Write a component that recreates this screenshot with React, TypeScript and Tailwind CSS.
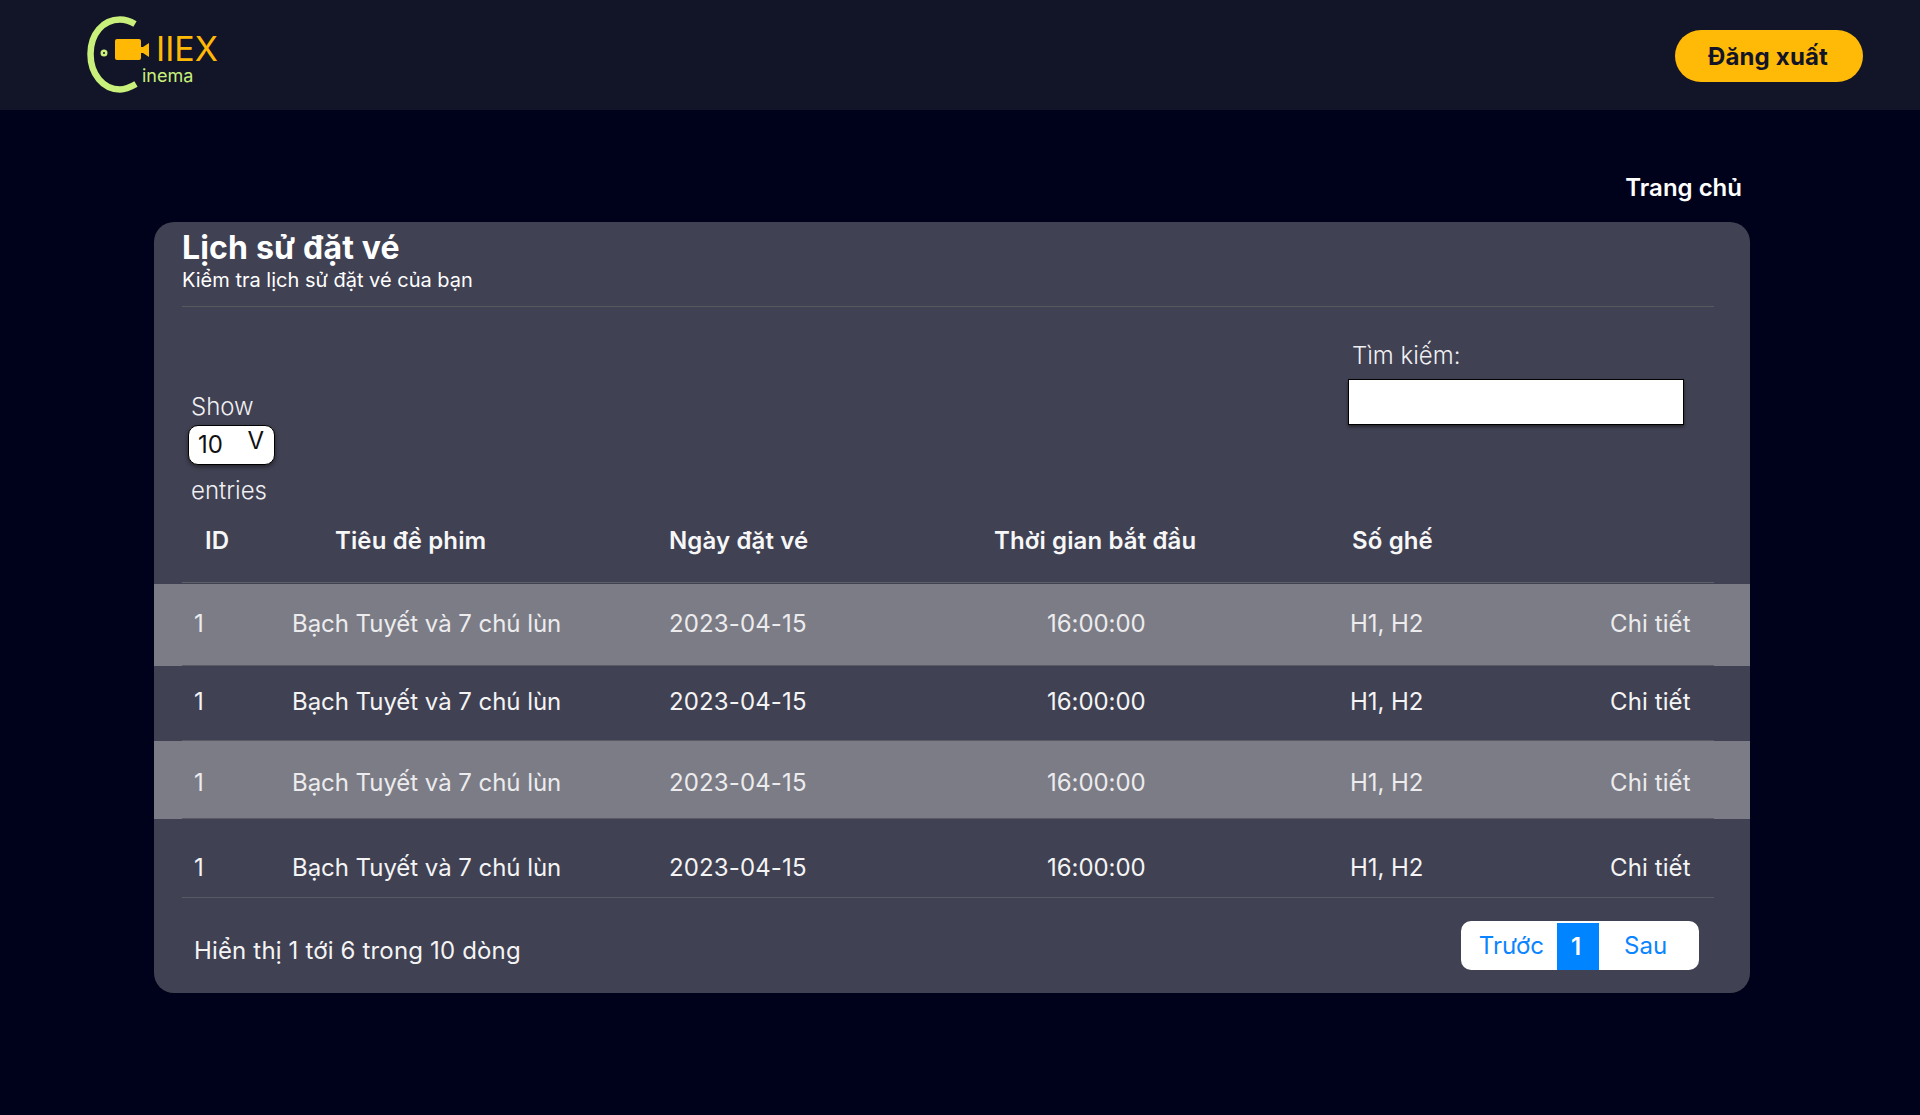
const rows = [
  { band: true, h: 'h-[82px]', pad: 'pb-[2px]' },
  { band: false, h: 'h-[75px]', pad: 'pb-[3px]' },
  { band: true, h: 'h-[78px]', pad: 'pt-[6px]' },
  { band: false, h: 'h-[79px]', pad: 'pt-[19px]' },
]

function Logo() {
  return (
    <div className="relative w-[140px] h-[110px]">
      <svg className="absolute left-0 top-0" width="140" height="110" viewBox="0 0 140 110" fill="none">
        <path d="M78 24 C72 20.5 68 19.5 63 19.5 C46 19.5 33.5 34 33.5 54 C33.5 74 46 89.5 63 89.5 C68 89.5 72 88 79 84" stroke="#c8f07a" strokeWidth="6.5" />
        <circle cx="47" cy="53" r="3.5" fill="#c8f07a" />
        <circle cx="47" cy="53" r="1" fill="#121527" />
        <rect x="58" y="39" width="26" height="21" rx="2" fill="#ffb905" />
        <path d="M83 47 H86 L92 43 V57 L86 53 H83 Z" fill="#ffb905" />
      </svg>
      <span className="absolute left-[99px] top-[34px] text-[34px] leading-[30px] text-[#ffb905]">IIEX</span>
      <span className="absolute left-[85px] top-[67px] text-[18px] leading-[18px] text-[#c8f07a]">inema</span>
    </div>
  )
}

function TableRow({ band, h, pad }: { band: boolean; h: string; pad: string }) {
  return (
    <div className={band ? 'bg-[#7c7c86] text-[#ececee]' : 'text-[#f4f4f5]'}>
      <div className={`ml-[28px] mr-[36px] grid grid-cols-[110px_377px_325px_356px_260px_1fr] items-center border-b border-[#5a5a66] text-[24px] tracking-[-0.05px] ${h} ${pad}`}>
        <div className="pl-[12px]">1</div>
        <div>Bạch Tuyết và 7 chú lùn</div>
        <div className="tracking-[0.13px]">2023-04-15</div>
        <div className="pl-[53px]">16:00:00</div>
        <div>H1, H2</div>
        <div className="tracking-[0.1px]">Chi tiết</div>
      </div>
    </div>
  )
}

export default function App() {
  return (
    <div className="min-h-[1115px] bg-[#00011a] text-white font-['Inter',sans-serif]">
      <header className="h-[110px] bg-[#121527] flex items-center justify-between pl-[57px] pr-[57px]">
        <Logo />
        <button className="w-[188px] h-[52px] mt-[2px] pr-[2px] pt-[1px] rounded-full bg-[#ffb907] text-[#121527] text-[24px] font-bold tracking-[0.17px]">
          Đăng xuất
        </button>
      </header>

      <main className="pl-[154px] pr-[170px]">
        <div className="h-[112px] flex items-end justify-end pb-[16px] pr-[8px] text-[24px] font-semibold">
          Trang chủ
        </div>

        <section className="w-[1596px] h-[771px] rounded-[20px] bg-[#404152]">
          <div className="ml-[28px] mr-[36px] h-[85px] border-b border-[#565a5c] pt-[6px]">
            <h1 className="text-[32px] leading-[40px] font-bold tracking-[0.17px]">Lịch sử đặt vé</h1>
            <p className="text-[20px] leading-[24px]">Kiểm tra lịch sử đặt vé của bạn</p>
          </div>

          <div className="flex justify-between h-[207px] pl-[34px] pr-[66px]">
            <div className="pt-[85px] text-[24px] font-light text-[#f0f0f2]">
              <div className="pl-[3px] leading-[30px]">Show</div>
              <div className="mt-[3px] w-[87px] h-[40px] rounded-[10px] border border-black bg-white shadow-[0_2px_4px_rgba(0,0,0,0.45)] flex items-center justify-between pl-[9px] pr-[10px] font-normal text-[#111]">
                <span>10</span>
                <span className="text-[24px] -mt-[8px]">V</span>
              </div>
              <div className="mt-[11px] pl-[3px] leading-[30px]">entries</div>
            </div>
            <div className="pt-[34px] w-[336px]">
              <div className="pl-[4px] text-[24px] leading-[30px] font-light text-[#f0f0f2]">Tìm kiếm:</div>
              <input className="mt-[8px] block w-[336px] h-[46px] border border-black bg-white shadow-[0_2px_3px_rgba(0,0,0,0.45)]" />
            </div>
          </div>

          <div className="ml-[28px] mr-[36px] h-[69px] pb-[14px] grid grid-cols-[110px_377px_325px_358px_260px_1fr] items-center border-b border-[#5f6068] text-[24px] font-semibold tracking-[0.12px] text-[#f7f7f8]">
            <div className="pl-[23px]">ID</div>
            <div className="pl-[43px]">Tiêu đề phim</div>
            <div>Ngày đặt vé</div>
            <div>Thời gian bắt đầu</div>
            <div>Số ghế</div>
            <div />
          </div>

          <div className="mt-[1px]">
            {rows.map((row, i) => (
              <TableRow key={i} {...row} />
            ))}
          </div>

          <div className="flex items-center justify-between pl-[40px] pr-[51px] pt-[23px]">
            <div className="text-[24px] pt-[11px] tracking-[0.16px] text-[#f4f4f5]">Hiển thị 1 tới 6 trong 10 dòng</div>
            <div className="w-[238px] h-[49px] rounded-[10px] bg-white flex items-end text-[24px] text-[#0a84ff] overflow-hidden">
              <div className="w-[96px] h-full flex items-center justify-end pr-[13px]">Trước</div>
              <div className="w-[42px] h-[47px] pr-[4px] bg-[#0184ff] text-white font-semibold flex items-center justify-center">1</div>
              <div className="flex-1 h-full flex items-center pl-[25px]">Sau</div>
            </div>
          </div>
        </section>
      </main>
    </div>
  )
}
